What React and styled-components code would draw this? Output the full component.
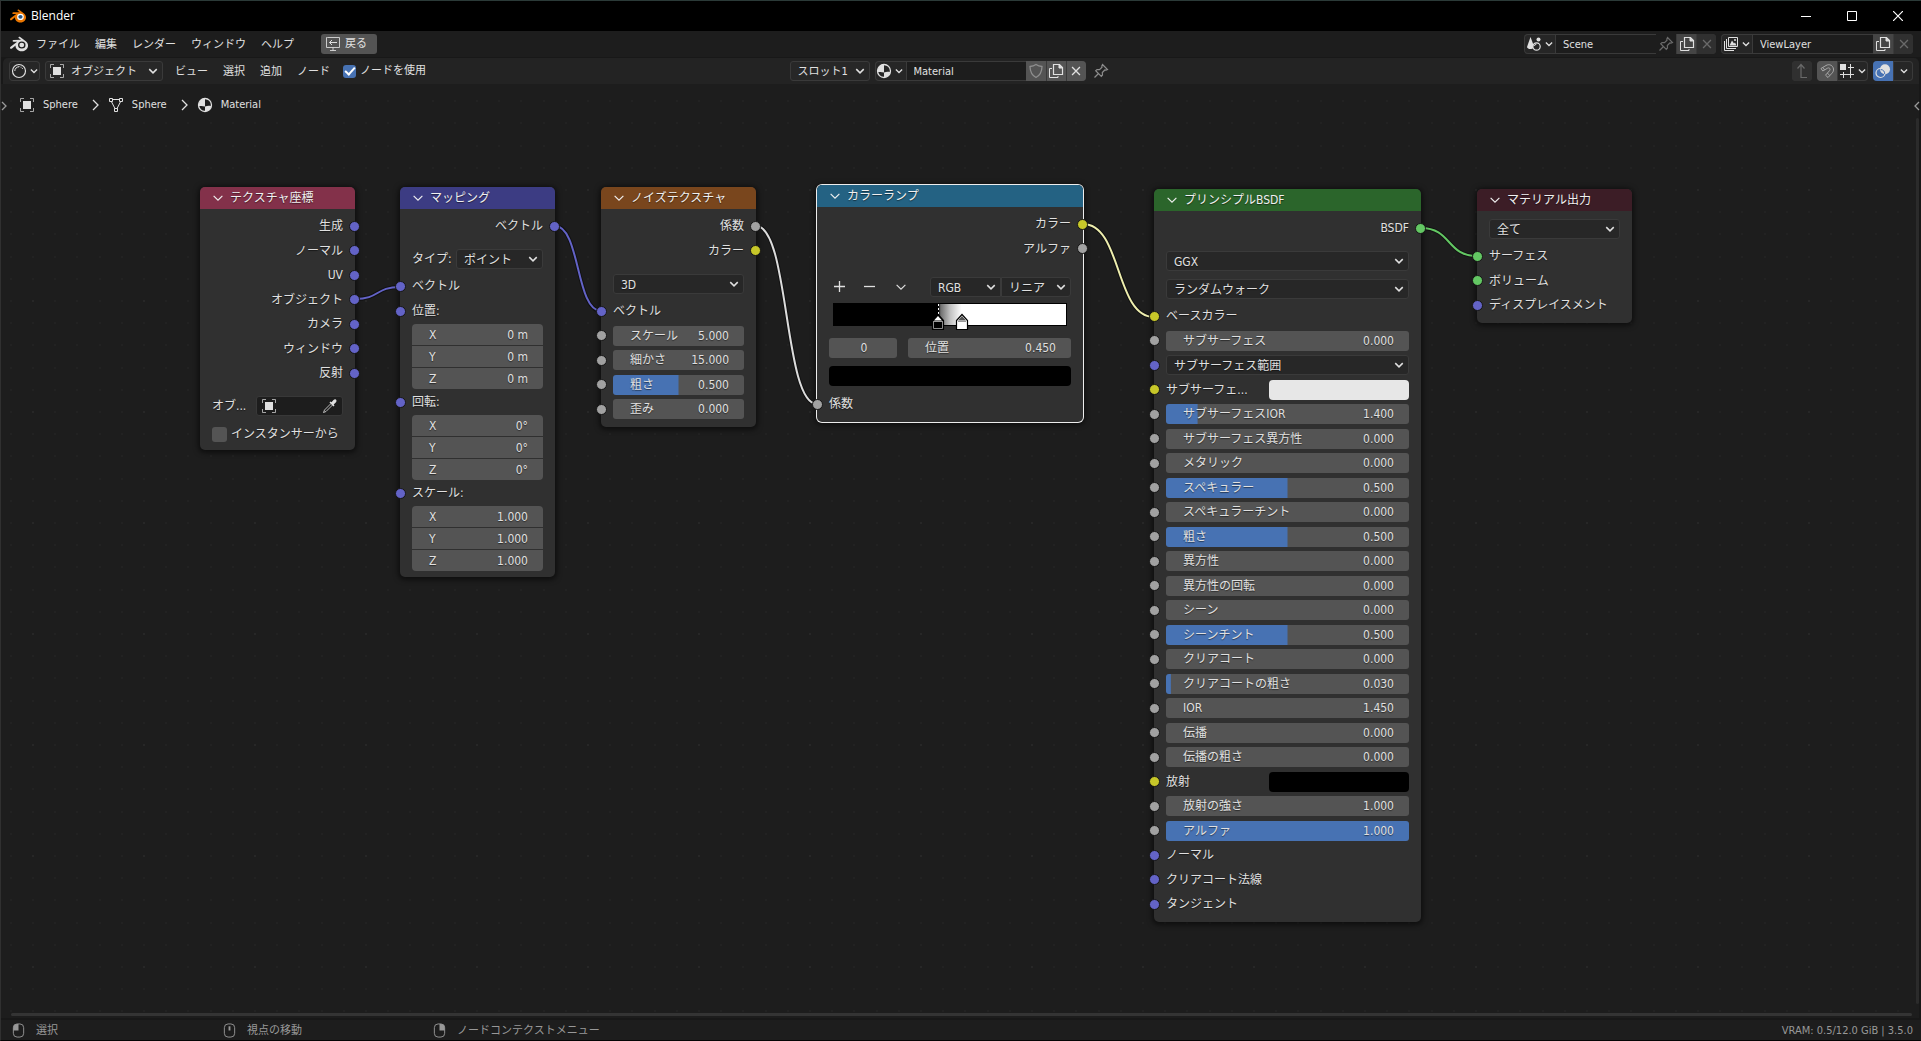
import React from 'react';
import styled, {createGlobalStyle} from 'styled-components';

const GlobalStyle = createGlobalStyle`
    *{
        box-sizing: border-box;
    }
    body{
        margin: 0;
        background: #1d1d1d;
        color: #e0e0e0;
        font-family: 'DejaVu Sans Condensed', 'DejaVu Sans', 'Noto Sans CJK JP', sans-serif;
        font-size: 11px;
        line-height: 16px;
    }
    button, input, select{
        margin: 0;
        padding: 0;
        border: 0;
        background: none;
        color: inherit;
        font: inherit;
        text-shadow: inherit;
    }
    a{
        color: inherit;
        text-decoration: none;
    }
    svg{
        display: block;
        flex: none;
    }
`;

// ---- window frame ----

const Window = styled.div`
    display: flex;
    flex-direction: column;
    min-height: 100vh;
    border-top: 1px solid #2b3a38;
    border-left: 1px solid #303030;
    border-bottom: 1px solid #050505;
    background: #181818;
    overflow: hidden;
`;
const TitleBar = styled.header`
    display: flex;
    align-items: center;
    gap: 5px;
    height: 30px;
    padding-left: 9px;
    background: #000;
    color: #fff;
    font-family: 'Open Sans', 'Noto Sans', sans-serif;
    font-size: 12px;
`;
const WindowButtons = styled.div`
    display: flex;
    margin-left: auto;
`;
const WindowButton = styled.button`
    display: grid;
    place-items: center;
    width: 46px;
    height: 30px;
    color: #fff;
`;
const TopBar = styled.nav`
    display: flex;
    align-items: center;
    justify-content: space-between;
    height: 26px;
    padding: 0 8px 0 9px;
    background: #1d1d1d;
`;
const EditorHeader = styled.div`
    display: grid;
    grid-template-columns: 1fr auto 1fr;
    align-items: center;
    height: 26px;
    margin: 1px 2px 0 2px;
    padding: 0 6px;
    border-radius: 5px 5px 0 0;
    background: #232323;
`;
const Group = styled.div`
    display: flex;
    align-items: center;
    justify-content: ${props => props.$end ? 'flex-end' : 'flex-start'};
    gap: 5px;
`;
const CenterGroup = styled(Group)`
    padding-right: 22px;
`;
const Menus = styled.div`
    display: flex;
    gap: 15px;
    padding: 0 8px 0 ${props => props.$inset || 7}px;
`;
const MenuButton = styled.button`
    height: 20px;
    padding-top: 2px;
`;
const BackButton = styled.button`
    display: flex;
    align-items: center;
    gap: 4px;
    height: 20px;
    margin-left: 14px;
    padding: 0 10px 0 4px;
    border-radius: 3px;
    background: #545454;
`;

// ---- widgets ----

const Strip = styled.div`
    display: flex;
    height: 20px;
    border-radius: 4px;
    background: #262626;
    box-shadow: inset 0 0 0 1px #3a3a3a;
    overflow: hidden;
`;
const IconButton = styled.button`
    display: flex;
    align-items: center;
    justify-content: center;
    gap: 2px;
    width: ${props => props.$wide ? 31 : 20}px;
    height: 100%;
    background: ${props => props.$tone || 'transparent'};
    color: ${props => props.$dim ? '#6a6a6a' : '#e0e0e0'};
    & + &{
        border-left: 1px solid #3a3a3a;
    }
`;
const NameInput = styled.input`
    width: ${props => props.$width}px;
    padding: 1px 0 0 7px;
    border: 1px solid #3a3a3a;
    border-right: 0;
    background: #1d1d1d;
`;
const PinButton = styled.button`
    padding: 0 2px;
    color: #8c8c8c;
`;
const SelectBox = styled.span`
    display: grid;
    align-items: center;
    width: ${props => props.$width ? props.$width + 'px' : '100%'};
    height: 20px;
    border: 1px solid #3a3a3a;
    border-radius: ${props => props.$radius || '3px'};
    background: #272727;
    > *{
        grid-area: 1 / 1;
    }
    > svg{
        pointer-events: none;
    }
    > svg:last-child{
        justify-self: end;
        margin-right: 3px;
    }
    > svg:first-child{
        margin-left: 3px;
    }
`;
const Select = styled.select`
    width: 100%;
    height: 18px;
    padding-top: 1px;
    padding-left: ${props => props.$icon ? 25 : 7}px;
    appearance: none;
    option{
        background: #282828;
    }
`;
const CheckLabel = styled.label`
    display: flex;
    align-items: center;
    gap: 4px;
    height: 20px;
`;
const Check = styled.input`
    display: grid;
    place-items: center;
    width: ${props => props.$size}px;
    height: ${props => props.$size}px;
    border-radius: 3px;
    background: #545454;
    appearance: none;
    &:checked{
        background: #4772b3;
    }
    &:checked::before{
        content: '';
        width: 4px;
        height: 8px;
        margin-bottom: 2px;
        border: solid #fff;
        border-width: 0 2px 2px 0;
        transform: rotate(42deg);
    }
`;

// ---- node canvas ----

const Canvas = styled.main`
    position: relative;
    flex: 1;
    min-height: 860px;
    margin: 0 2px 2px 0;
    background: #1d1d1d;
`;
const Backdrop = styled.svg`
    position: absolute;
    inset: 0;
    width: 100%;
    height: 100%;
`;
const Breadcrumbs = styled.nav`
    position: relative;
    display: flex;
    align-items: center;
    gap: 8px;
    padding: 13px 18px;
    > svg{
        margin-left: 6px;
    }
`;
const Crumb = styled.a`
    display: flex;
    align-items: center;
    gap: 8px;
`;
const EdgeArrow = styled.button`
    position: absolute;
    top: 14px;
    ${props => props.$side}: ${props => props.$side === 'left' ? 0 : -1}px;
    height: 16px;
    color: #9a9a9a;
`;
const ScrollX = styled.div`
    position: absolute;
    left: 10px;
    right: 7px;
    bottom: 2px;
    height: 3px;
    border-radius: 2px;
    background: #343434;
`;
const ScrollY = styled.div`
    position: absolute;
    top: 34px;
    right: 0;
    bottom: 14px;
    width: 3px;
    border-radius: 2px;
    background: #2b2b2b;
`;
const NodeBox = styled.section`
    position: absolute;
    left: ${props => props.$x}px;
    top: ${props => props.$y}px;
    width: ${props => props.$width}px;
    padding-bottom: 6px;
    border-radius: 5px;
    background: #303030;
    box-shadow: ${props => props.$active ? '0 0 0 1px #ededed, ' : ''}0 1px 5px 2px rgba(0, 0, 0, .5);
    font-size: 12px;
    text-shadow: 0 1px 1px rgba(0, 0, 0, .5);
`;
const NodeTitle = styled.h2`
    display: flex;
    align-items: center;
    gap: 5px;
    height: 22px;
    margin: 0 0 5px;
    padding-left: 11px;
    border-radius: 5px 5px 0 0;
    background: ${props => props.$color};
    color: #f0f0f0;
    font-size: 12px;
    font-weight: normal;
`;
const Sockets = styled.div`
    display: grid;
    grid-auto-rows: 24px 25px;
    padding: 0 12px;
`;
const SocketRow = styled.div`
    position: relative;
    display: flex;
    align-items: center;
    justify-content: ${props => props.$out ? 'flex-end' : 'space-between'};
`;
const LabelRow = styled(SocketRow)`
    height: 26px;
    padding: 0 12px;
`;
const Dot = styled.span`
    position: absolute;
    ${props => props.$side}: ${props => props.$inset ? -5 : -17}px;
    width: 11px;
    height: 11px;
    border: 1px solid #161616;
    border-radius: 50%;
    background: ${props => props.$color};
`;
const Props = styled.div`
    display: grid;
    gap: 8px;
    padding: ${props => props.$top || 11}px 12px ${props => props.$last ? 0 : 5}px;
`;
const PropRow = styled.label`
    display: grid;
    grid-template-columns: 44px 1fr;
    align-items: center;
    height: 20px;
`;
const ObjectField = styled.span`
    display: flex;
    align-items: center;
    justify-content: space-between;
    height: 20px;
    padding: 0 4px;
    border: 1px solid #383838;
    border-radius: 3px;
    background: #1d1d1d;
`;
const Field = styled.label`
    display: flex;
    align-items: center;
    width: 100%;
    height: 20px;
    padding: 0 15px 0 17px;
    border-radius: 3px;
    background: linear-gradient(#4772b3, #4772b3) 0 0 / var(--fill, 0) 100% no-repeat #545454;
    white-space: nowrap;
`;
const FieldValue = styled.input`
    flex: 1;
    width: 0;
    min-width: 0;
    text-align: ${props => props.$center ? 'center' : 'right'};
`;
const Stack = styled.div`
    display: grid;
    gap: 1px;
    margin: 0 12px;
    border-radius: 4px;
    overflow: hidden;
    > label{
        height: 21px;
        border-radius: 0;
    }
`;
const Swatch = styled.button`
    width: ${props => props.$width ? props.$width + 'px' : '100%'};
    height: 20px;
    border-radius: 4px;
    background: ${props => props.$color};
`;
const RampTools = styled.div`
    display: flex;
    align-items: center;
    padding: 16px 12px 6px 15px;
`;
const RampButton = styled.button`
    width: ${props => props.$width}px;
    height: 20px;
`;
const Ramp = styled.div`
    position: relative;
    height: 23px;
    margin: 0 16px;
    border: 1px solid #000;
    background: linear-gradient(90deg, #000 45%, #707070 46%, #c0c0c0 50%, #fff 55%);
`;
const Stop = styled.button`
    position: absolute;
    top: 0;
    width: 14px;
    height: 26px;
    margin-left: -7px;
`;
const RampFields = styled.div`
    display: grid;
    grid-template-columns: 68px 1fr;
    gap: 8px 11px;
    padding: 12px 12px 6px;
    > :last-child{
        grid-column: 1 / 3;
    }
`;
const StatusBar = styled.footer`
    display: flex;
    align-items: center;
    justify-content: space-between;
    height: 20px;
    padding: 1px 8px 0 10px;
    background: #1d1d1d;
    color: #989898;
`;
const Hints = styled.div`
    display: grid;
    grid-template-columns: 211px 210px auto;
`;
const Hint = styled.span`
    display: flex;
    align-items: center;
    gap: 10px;
`;

// ---- icons ----

const Icon = ({size = 16, children, ...rest}) => (
    <svg width={size} height={size} viewBox="0 0 16 16" fill="none" stroke="currentColor" aria-hidden="true" {...rest}>
        {children}
    </svg>
);
const Chevron = ({size = 12}) => (
    <Icon size={size}><path d="M3 5.5l5 5 5-5" strokeWidth={size > 12 ? 1.3 : 2} /></Icon>
);
const ArrowRight = () => (
    <svg width="8" height="16" viewBox="0 0 8 16" fill="none" stroke="currentColor"><path d="M1 3l5 5-5 5" strokeWidth="1.3" /></svg>
);
const LOGO = 'M7.35 14.831c.006.314.106.922.256 1.398a7.372 7.372 0 0 0 1.593 2.757 8.227 8.227 0 0 0 2.787 2.001 8.947 8.947 0 0 0 3.66.76 8.964 8.964 0 0 0 3.657-.772 8.285 8.285 0 0 0 2.785-2.01 7.428 7.428 0 0 0 1.592-2.762 6.964 6.964 0 0 0 .25-3.074 7.123 7.123 0 0 0-1.016-2.779 7.764 7.764 0 0 0-1.852-2.043h.002L13.566 2.55l-.02-.015c-.492-.378-1.319-.376-1.86.002-.547.382-.609 1.015-.123 1.415l-.001.001 3.126 2.543-9.53.01h-.013c-.788.001-1.545.518-1.695 1.172-.154.665.38 1.217 1.2 1.22V8.9l4.83-.01-8.62 6.617-.034.025c-.813.622-1.075 1.658-.563 2.315.52.667 1.625.668 2.447.004L7.414 14s-.069.52-.063.831z';
const Logo = ({size, color, ring, pupil}) => (
    <svg width={size} height={size} viewBox="0 0 24 24" aria-hidden="true">
        <path d={LOGO} fill={color} />
        <ellipse cx="15.7" cy="13.4" rx="5" ry="4.7" fill={ring} />
        <ellipse cx="15.7" cy="13.3" rx="3.2" ry="2.9" fill={pupil} />
    </svg>
);
const ObjectIcon = () => (
    <Icon>
        <rect x="4" y="4" width="8" height="8" fill="currentColor" stroke="none" />
        <path d="M1.5 5V1.5H5M11 1.5h3.5V5M14.5 11v3.5H11M5 14.5H1.5V11" opacity=".7" />
    </Icon>
);
const MeshIcon = () => (
    <Icon>
        <path d="M4.5 2.5h7M3.3 4.4l3.8 7.4M12.7 4.4l-3.8 7.4" />
        <path d="M1.5 1.5h3v3h-3zM11.5 1.5h3v3h-3zM6.5 11.5h3v3h-3z" />
    </Icon>
);
const MaterialIcon = () => (
    <Icon>
        <circle cx="8" cy="8" r="6.5" strokeWidth="1.3" />
        <path d="M8 1.5A6.5 6.5 0 0 0 1.7 9.3C3.6 8.8 5.6 8.8 8 9.6z" fill="currentColor" stroke="none" />
        <path d="M8 9.6c2.4-.9 4.5-1 6.3-.3A6.5 6.5 0 0 1 8 14.5z" fill="currentColor" stroke="none" />
    </Icon>
);
const ShaderIcon = () => (
    <Icon>
        <circle cx="8" cy="8" r="6.5" strokeWidth="1.2" />
        <path d="M3.8 8A4.2 4.2 0 0 1 8 3.8" />
        <path d="M8 3.5h.1M10 4.2h.1M11.3 5.5h.1" strokeLinecap="round" />
    </Icon>
);
const BackIcon = () => (
    <Icon>
        <path d="M2.5 1.5h-1v10h13v-10h-12M8 11.5v3M5 14.5h6" opacity=".85" />
        <path d="M12 6.5H4.500M7 4L4.5 6.5 7 9" />
    </Icon>
);
const SceneIcon = () => (
    <Icon>
        <path d="M4.5 1L1 11c0 2 5 3 6 1l.5-3z" fill="currentColor" stroke="none" />
        <circle cx="10.5" cy="10.5" r="3.7" strokeWidth="1.2" />
        <path d="M8.5 10a2 2 0 0 1 2-2" />
        <circle cx="12.5" cy="3.5" r="2" fill="currentColor" stroke="none" />
    </Icon>
);
const LayerIcon = () => (
    <Icon>
        <path d="M1.5 5v9.500H11M3.5 3v9.500H13" />
        <path d="M5.5 1.5h9v9h-9z" />
        <path d="M6.5 9.5l2.5-5 2 3 1-1 1.5 3z" fill="currentColor" stroke="none" />
        <circle cx="12" cy="4" r="1" fill="currentColor" stroke="none" />
    </Icon>
);
const CopyIcon = () => (
    <Icon>
        <path d="M4 5.5H1.5v9H10V13" />
        <path d="M5.5 1.5h6l3 3v7h-9z" strokeWidth="1.2" />
        <path d="M11 1.5v3.500h3.500z" fill="currentColor" />
    </Icon>
);
const CrossIcon = () => <Icon size={14}><path d="M3.5 3.5l9 9M12.5 3.5l-9 9" strokeWidth="1.5" /></Icon>;
const ShieldIcon = () => (
    <Icon stroke="#8e8e8e"><path d="M8 1.5c1.8 1.3 3.8 1.9 6 2-.1 5-1.9 8.8-6 11-4.1-2.2-5.9-6-6-11 2.200-.1 4.200-.7 6-2z" strokeWidth="1.3" /></Icon>
);
const PinIcon = () => (
    <Icon><path d="M9.5 1.5l5 5-1.5.7-1.2-.2-2.5 2.5.2 2.5-1.2 1.3-5.6-5.6L4 6.5l2.5.2L9 4.2l-.2-1.2zM5.5 10.5l-4 4" strokeWidth="1.2" /></Icon>
);
const ParentIcon = () => <Icon><path d="M3.500 5.500l3.500-4 3.500 4M7 2v12.500h6" strokeWidth="1.2" /></Icon>;
const MagnetIcon = () => (
    <Icon stroke="#a8a8a8">
        <path d="M2 5.5l5-3c3.5-2 7 0 7.5 3.5.2 1.5-.3 3-1.5 4.2l-4 4.3-2.5-2.3 4-4.500c1.5-1.8-.3-3.5-2-2.5L3.800 8z" />
        <path d="M4 4.500l1.600 2.500M8.200 10l2.500 2.300" />
    </Icon>
);
const SnapGridIcon = () => (
    <Icon>
        <rect x="1" y="1" width="6" height="6" fill="currentColor" stroke="none" />
        <path d="M11.500 1v14M1 11.500h14M9 4.500h6M4.500 9v6" />
    </Icon>
);
const OverlayIcon = () => (
    <Icon>
        <circle cx="5.5" cy="10" r="4.5" strokeWidth="1.2" />
        <circle cx="10" cy="6.2" r="5" fill="currentColor" stroke="none" />
        <path d="M5.7 6.5a4.5 4.5 0 0 1 4 4.500" stroke="#4772b3" />
    </Icon>
);
const DropperIcon = () => (
    <Icon>
        <path d="M9 5.500l-6.500 6.500-1 2.500 2.500-1L10.500 7" opacity=".8" />
        <path d="M7.500 4.500l1-1 1 .8 2-2.300c2-2 4 .3 2.500 2.200L11.700 6.500l.8 1-1 1z" fill="currentColor" stroke="none" />
    </Icon>
);
const MouseIcon = ({button}) => (
    <Icon size={15}>
        <rect x="2.5" y="1" width="11" height="14" rx="4" />
        {button === 'left' && <path d="M2.5 8V5a4 4 0 0 1 4-4H8v7z" fill="currentColor" stroke="none" />}
        {button === 'middle' && <path d="M7 3.500h2v4.500H7z" fill="currentColor" stroke="none" />}
        {button === 'right' && <path d="M13.5 8V5a4 4 0 0 0-4-4H8v7z" fill="currentColor" stroke="none" />}
    </Icon>
);

// ---- shared pieces ----

const VECTOR = '#6363c7';
const VALUE = '#a1a1a1';
const COLOR = '#c7c729';
const SHADER = '#63c763';

const Dropdown = ({value, label, width, radius, icon}) => (
    <SelectBox $width={width} $radius={radius}>
        {icon}
        <Select aria-label={label || value} $icon={!!icon}>
            <option>{value}</option>
        </Select>
        <Chevron />
    </SelectBox>
);
const NumberField = ({label, value, fill}) => (
    <Field style={fill ? {'--fill': fill + '%'} : undefined}>
        {label}
        <FieldValue defaultValue={value} />
    </Field>
);
const Outputs = ({items}) => (
    <Sockets>
        {items.map(([label, color]) => (
            <SocketRow key={label} $out>
                {label}
                <Dot $side="right" $color={color} />
            </SocketRow>
        ))}
    </Sockets>
);
const Input = ({item}) => (
    <SocketRow>
        <Dot $side="left" $color={item.color || VALUE} />
        {item.kind === 'slider' && <NumberField label={item.label} value={item.value} fill={item.fill} />}
        {item.kind === 'select' && <Dropdown value={item.label} />}
        {!item.kind && <span>{item.label}</span>}
        {item.swatch && <Swatch $width={140} $color={item.swatch} aria-label={item.label} />}
    </SocketRow>
);
const Inputs = ({items}) => (
    <Sockets>
        {items.map((item, i) => <Input key={i} item={item} />)}
    </Sockets>
);
const Node = ({title, color, x, y, width, active, children}) => (
    <NodeBox $x={x} $y={y} $width={width} $active={active}>
        <NodeTitle $color={color}><Chevron size={14} />{title}</NodeTitle>
        {children}
    </NodeBox>
);
const VectorInput = ({label, values}) => (
    <>
        <LabelRow>
            <Dot $side="left" $inset $color={VECTOR} />
            {label}
        </LabelRow>
        <Stack>
            {['X', 'Y', 'Z'].map((axis, i) => <NumberField key={axis} label={axis} value={values[i]} />)}
        </Stack>
    </>
);
const StopMarker = ({at, fill, top, selected}) => (
    <Stop style={{left: at + '%'}} aria-label={'ストップ ' + at}>
        <svg width="14" height="26" viewBox="0 0 14 26">
            {selected && <path d="M7.5 0v11" stroke="#fff" strokeDasharray="2 2" />}
            <path d="M7 10.500l5.500 6v9h-11v-9z" fill={fill} stroke="#000" strokeWidth="1.200" />
            <path d="M7 12l4 4.500H3z" fill={top} />
            <path d="M3 17.500h8" stroke="#9a9a9a" />
            {selected && <path d="M2.500 17v7.500h9V17" fill="none" stroke="#8a8a8a" />}
        </svg>
    </Stop>
);

const slider = (label, value, fill) => ({kind: 'slider', label, value, fill});

const principled = [
    {label: 'ベースカラー', color: COLOR},
    slider('サブサーフェス', '0.000'),
    {kind: 'select', label: 'サブサーフェス範囲', color: VECTOR},
    {label: 'サブサーフェ...', color: COLOR, swatch: '#e7e7e7'},
    slider('サブサーフェスIOR', '1.400', 13),
    slider('サブサーフェス異方性', '0.000'),
    slider('メタリック', '0.000'),
    slider('スペキュラー', '0.500', 50),
    slider('スペキュラーチント', '0.000'),
    slider('粗さ', '0.500', 50),
    slider('異方性', '0.000'),
    slider('異方性の回転', '0.000'),
    slider('シーン', '0.000'),
    slider('シーンチント', '0.500', 50),
    slider('クリアコート', '0.000'),
    slider('クリアコートの粗さ', '0.030', 2),
    slider('IOR', '1.450'),
    slider('伝播', '0.000'),
    slider('伝播の粗さ', '0.000'),
    {label: '放射', color: COLOR, swatch: '#000'},
    slider('放射の強さ', '1.000'),
    slider('アルファ', '1.000', 100),
    {label: 'ノーマル', color: VECTOR},
    {label: 'クリアコート法線', color: VECTOR},
    {label: 'タンジェント', color: VECTOR},
];

// canvas coordinates of both ends of each link
const links = [
    {from: [354, 215], to: [399, 203], color: VECTOR},
    {from: [554, 142], to: [600, 227], color: VECTOR},
    {from: [755, 142], to: [816, 320], color: '#dcdcdc'},
    {from: [1082, 140], to: [1153, 233], color: '#eeeeae'},
    {from: [1420, 144], to: [1476, 172], color: SHADER},
];
const linkPath = ({from: [x1, y1], to: [x2, y2]}) => {
    const h = (x2 - x1) * .55;
    return `M${x1} ${y1}C${x1 + h} ${y1} ${x2 - h} ${y2} ${x2} ${y2}`;
};
const gridSteps = [0, 22, 44, 67, 89];

const CanvasBackdrop = () => (
    <Backdrop aria-hidden="true" fill="none">
        <defs>
            <pattern id="dots" x="31" y="-6" width="111" height="111" patternUnits="userSpaceOnUse">
                {gridSteps.map(gx => gridSteps.map(gy => (
                    <rect key={gx + '-' + gy} x={gx} y={gy} width="2" height="2" fill={gx || gy ? '#222' : '#272727'} />
                )))}
            </pattern>
        </defs>
        <rect width="100%" height="100%" fill="url(#dots)" />
        {links.map(link => (
            <g key={link.from[0]}>
                <path d={linkPath(link)} stroke="#111" strokeWidth="4" />
                <path d={linkPath(link)} stroke={link.color} strokeWidth="2" />
            </g>
        ))}
    </Backdrop>
);

class App extends React.Component{
    renderTop(){
        return(
            <>
                <TitleBar>
                    <Logo size={16} color="#ea7600" ring="#fff" pupil="#265787" />
                    <span>Blender</span>
                    <WindowButtons>
                        <WindowButton aria-label="最小化"><svg width="10" height="10"><path d="M0 5.500h10" stroke="#fff" /></svg></WindowButton>
                        <WindowButton aria-label="最大化"><svg width="10" height="10"><path d="M.5.5h9v9h-9z" fill="none" stroke="#fff" /></svg></WindowButton>
                        <WindowButton aria-label="閉じる"><svg width="10" height="10"><path d="M0 0l10 10M10 0L0 10" stroke="#fff" strokeWidth="1.200" /></svg></WindowButton>
                    </WindowButtons>
                </TitleBar>
                <TopBar>
                    <Group>
                        <Logo size={18} color="#e0e0e0" ring="#1d1d1d" pupil="#e0e0e0" />
                        <Menus $inset={3}>
                            {['ファイル', '編集', 'レンダー', 'ウィンドウ', 'ヘルプ'].map(m => <MenuButton key={m}>{m}</MenuButton>)}
                        </Menus>
                        <BackButton><BackIcon />戻る</BackButton>
                    </Group>
                    <Group $end>
                        <Strip>
                            <IconButton $wide aria-label="シーン"><SceneIcon /><Chevron size={10} /></IconButton>
                            <NameInput $width={101} defaultValue="Scene" aria-label="シーン名" />
                            <IconButton $dim $tone="#1d1d1d" aria-label="ピン"><PinIcon /></IconButton>
                            <IconButton $tone="#454545" aria-label="新規シーン"><CopyIcon /></IconButton>
                            <IconButton $dim $tone="#303030" aria-label="シーンを削除"><CrossIcon /></IconButton>
                        </Strip>
                        <Strip>
                            <IconButton $wide aria-label="ビューレイヤー"><LayerIcon /><Chevron size={10} /></IconButton>
                            <NameInput $width={121} defaultValue="ViewLayer" aria-label="ビューレイヤー名" />
                            <IconButton $tone="#454545" aria-label="新規レイヤー"><CopyIcon /></IconButton>
                            <IconButton $dim $tone="#303030" aria-label="レイヤーを削除"><CrossIcon /></IconButton>
                        </Strip>
                    </Group>
                </TopBar>
                <EditorHeader>
                    <Group>
                        <Strip><IconButton $wide aria-label="エディタータイプ"><ShaderIcon /><Chevron size={10} /></IconButton></Strip>
                        <Dropdown value="オブジェクト" label="シェーダータイプ" width={118} icon={<ObjectIcon />} />
                        <Menus>
                            {['ビュー', '選択', '追加', 'ノード'].map(m => <MenuButton key={m}>{m}</MenuButton>)}
                        </Menus>
                        <CheckLabel><Check type="checkbox" $size={13} defaultChecked />ノードを使用</CheckLabel>
                    </Group>
                    <CenterGroup>
                        <Dropdown value="スロット1" label="スロット" width={80} />
                        <Strip>
                            <IconButton $wide aria-label="マテリアル"><MaterialIcon /><Chevron size={10} /></IconButton>
                            <NameInput $width={120} defaultValue="Material" aria-label="マテリアル名" />
                            <IconButton $dim $tone="#545454" aria-label="フェイクユーザー"><ShieldIcon /></IconButton>
                            <IconButton $tone="#545454" aria-label="新規マテリアル"><CopyIcon /></IconButton>
                            <IconButton $tone="#545454" aria-label="リンク解除"><CrossIcon /></IconButton>
                        </Strip>
                        <PinButton aria-label="ピン"><PinIcon /></PinButton>
                    </CenterGroup>
                    <Group $end>
                        <Strip><IconButton $dim $tone="#303030" aria-label="親ノードツリーへ"><ParentIcon /></IconButton></Strip>
                        <Strip>
                            <IconButton $tone="#545454" aria-label="スナップ"><MagnetIcon /></IconButton>
                            <IconButton $wide aria-label="スナップ先"><SnapGridIcon /><Chevron size={10} /></IconButton>
                        </Strip>
                        <Strip>
                            <IconButton $tone="#4772b3" aria-label="オーバーレイ"><OverlayIcon /></IconButton>
                            <IconButton aria-label="オーバーレイ設定"><Chevron size={10} /></IconButton>
                        </Strip>
                    </Group>
                </EditorHeader>
            </>
        )
    }
    renderNodes(){
        return(
            <>
                <Node title="テクスチャ座標" color="#83314a" x={199} y={103} width={155}>
                    <Outputs items={['生成', 'ノーマル', 'UV', 'オブジェクト', 'カメラ', 'ウィンドウ', '反射'].map(l => [l, VECTOR])} />
                    <Props $last>
                        <PropRow as="div">
                            オブ...
                            <ObjectField><ObjectIcon /><button aria-label="スポイト"><DropperIcon /></button></ObjectField>
                        </PropRow>
                        <CheckLabel><Check type="checkbox" $size={15} />インスタンサーから</CheckLabel>
                    </Props>
                </Node>
                <Node title="マッピング" color="#3c3c83" x={399} y={103} width={155}>
                    <Outputs items={[['ベクトル', VECTOR]]} />
                    <Props>
                        <PropRow>タイプ: <Dropdown value="ポイント" /></PropRow>
                    </Props>
                    <Inputs items={[{label: 'ベクトル', color: VECTOR}]} />
                    <VectorInput label="位置:" values={['0 m', '0 m', '0 m']} />
                    <VectorInput label="回転:" values={['0°', '0°', '0°']} />
                    <VectorInput label="スケール:" values={['1.000', '1.000', '1.000']} />
                </Node>
                <Node title="ノイズテクスチャ" color="#79461d" x={600} y={103} width={155}>
                    <Outputs items={[['係数', VALUE], ['カラー', COLOR]]} />
                    <Props><Dropdown value="3D" /></Props>
                    <Inputs items={[
                        {label: 'ベクトル', color: VECTOR},
                        slider('スケール', '5.000'),
                        slider('細かさ', '15.000'),
                        slider('粗さ', '0.500', 50),
                        slider('歪み', '0.000'),
                    ]} />
                </Node>
                <Node title="カラーランプ" color="#246283" x={816} y={101} width={266} active>
                    <Outputs items={[['カラー', COLOR], ['アルファ', VALUE]]} />
                    <RampTools>
                        <RampButton $width={30} aria-label="追加"><Icon><path d="M7.500 2v11M2 7.500h11" strokeWidth="1.300" /></Icon></RampButton>
                        <RampButton $width={32} aria-label="削除"><Icon><path d="M2 7.500h11" strokeWidth="1.300" /></Icon></RampButton>
                        <RampButton $width={36} aria-label="ツール"><Chevron size={14} /></RampButton>
                        <Dropdown value="RGB" width={71} radius="3px 0 0 3px" />
                        <Dropdown value="リニア" width={70} radius="0 3px 3px 0" />
                    </RampTools>
                    <Ramp>
                        <StopMarker at={45} fill="#000" top="#fff" selected />
                        <StopMarker at={55} fill="#fff" top="#555" />
                    </Ramp>
                    <RampFields>
                        <Field><FieldValue $center defaultValue="0" aria-label="インデックス" /></Field>
                        <NumberField label="位置" value="0.450" />
                        <Swatch $color="#000" aria-label="カラー" />
                    </RampFields>
                    <Inputs items={[{label: '係数'}]} />
                </Node>
                <Node title="プリンシプルBSDF" color="#2b652b" x={1153} y={105} width={267}>
                    <Outputs items={[['BSDF', SHADER]]} />
                    <Props>
                        <Dropdown value="GGX" />
                        <Dropdown value="ランダムウォーク" />
                    </Props>
                    <Inputs items={principled} />
                </Node>
                <Node title="マテリアル出力" color="#3c1d26" x={1476} y={105} width={155}>
                    <Props $top={3}><Dropdown value="全て" /></Props>
                    <Inputs items={[
                        {label: 'サーフェス', color: SHADER},
                        {label: 'ボリューム', color: SHADER},
                        {label: 'ディスプレイスメント', color: VECTOR},
                    ]} />
                </Node>
            </>
        )
    }
    render(){
        return(
            <Window lang="ja">
                <GlobalStyle />
                {this.renderTop()}
                <Canvas>
                    <CanvasBackdrop />
                    <Breadcrumbs>
                        <Crumb href="#object"><ObjectIcon />Sphere</Crumb>
                        <ArrowRight />
                        <Crumb href="#mesh"><MeshIcon />Sphere</Crumb>
                        <ArrowRight />
                        <Crumb href="#material"><MaterialIcon />Material</Crumb>
                    </Breadcrumbs>
                    <EdgeArrow $side="left" aria-label="ツールバー"><svg width="6" height="12" fill="none" stroke="currentColor"><path d="M1 2l4 4-4 4" strokeWidth="1.300" /></svg></EdgeArrow>
                    <ScrollY />
                    <ScrollX />
                    <EdgeArrow $side="right" aria-label="サイドバー"><svg width="6" height="12" fill="none" stroke="currentColor"><path d="M5 2L1 6l4 4" strokeWidth="1.300" /></svg></EdgeArrow>
                    {this.renderNodes()}
                </Canvas>
                <StatusBar>
                    <Hints>
                        <Hint><MouseIcon button="left" />選択</Hint>
                        <Hint><MouseIcon button="middle" />視点の移動</Hint>
                        <Hint><MouseIcon button="right" />ノードコンテクストメニュー</Hint>
                    </Hints>
                    <span>VRAM: 0.5/12.0 GiB | 3.5.0</span>
                </StatusBar>
            </Window>
        )
    }
}
export default App;
